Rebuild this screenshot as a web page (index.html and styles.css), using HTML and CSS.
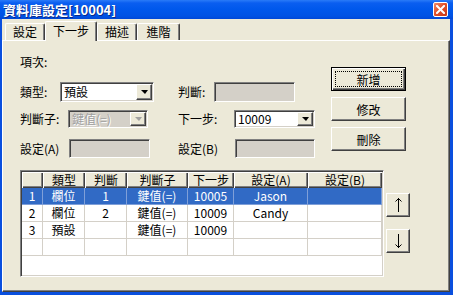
FILE: index.html
```html
<!DOCTYPE html>
<html>
<head>
<meta charset="utf-8">
<link rel="stylesheet" href="styles.css">
</head>
<body>
<div class="window">
  <div class="titlebar">
    <span class="title">資料庫設定[10004]</span>
    <span class="close"><svg width="9" height="9" viewBox="0 0 9 9"><path d="M1 1L8 8M8 1L1 8" stroke="#fff" stroke-width="2" stroke-linecap="square"/></svg></span>
  </div>
  <div class="client">
    <div class="tabs">
      <div class="tab w40">設定</div>
      <div class="tab sel">下一步</div>
      <div class="tab w40">描述</div>
      <div class="tab w43">進階</div>
    </div>
    <div class="panel">
      <div class="top">
        <div class="form">
          <div class="row r0"><span class="lbl">項次:</span></div>
          <div class="row r1">
            <div class="group">
              <span class="lbl l40">類型:</span>
              <div class="combo c94"><span class="val">預設</span><span class="dd"><i></i></span></div>
            </div>
            <div class="group">
              <span class="lbl l36">判斷:</span>
              <div class="field c81 h20"></div>
            </div>
          </div>
          <div class="row r2">
            <div class="group">
              <span class="lbl l48">判斷子:</span>
              <div class="combo c80 off"><span class="val">鍵值(=)</span><span class="dd"><i></i></span></div>
            </div>
            <div class="group">
              <span class="lbl l56">下一步:</span>
              <div class="combo c81"><span class="val">10009</span><span class="dd"><i></i></span></div>
            </div>
          </div>
          <div class="row r3">
            <div class="group">
              <span class="lbl l49">設定(A)</span>
              <div class="field c81"></div>
            </div>
            <div class="group">
              <span class="lbl l57">設定(B)</span>
              <div class="field c80"></div>
            </div>
          </div>
        </div>
        <div class="buttons">
          <div class="btn default"><span class="focus">新增</span></div>
          <div class="btn">修改</div>
          <div class="btn">刪除</div>
        </div>
      </div>
      <div class="bottom">
        <div class="grid">
          <div class="hd"></div><div class="hd">類型</div><div class="hd">判斷</div><div class="hd">判斷子</div><div class="hd">下一步</div><div class="hd">設定(A)</div><div class="hd">設定(B)</div>
          <div class="c s">1</div><div class="c s">欄位</div><div class="c s">1</div><div class="c s">鍵值(=)</div><div class="c s">10005</div><div class="c s">Jason</div><div class="c s"></div>
          <div class="c">2</div><div class="c">欄位</div><div class="c">2</div><div class="c">鍵值(=)</div><div class="c">10009</div><div class="c">Candy</div><div class="c"></div>
          <div class="c">3</div><div class="c">預設</div><div class="c"></div><div class="c">鍵值(=)</div><div class="c">10009</div><div class="c"></div><div class="c"></div>
          <div class="c"></div><div class="c"></div><div class="c"></div><div class="c"></div><div class="c"></div><div class="c"></div><div class="c"></div>
        </div>
        <div class="arrows">
          <div class="btn sq"><svg width="9" height="16" viewBox="0 0 9 16"><path d="M4.5 1V15M1.5 4.5L4.5 1.5L7.5 4.5" stroke="#000" fill="none" stroke-width="1"/></svg></div>
          <div class="btn sq"><svg width="9" height="16" viewBox="0 0 9 16"><path d="M4.5 1V15M1.5 11.5L4.5 14.5L7.5 11.5" stroke="#000" fill="none" stroke-width="1"/></svg></div>
        </div>
      </div>
    </div>
  </div>
</div>
</body>
</html>
```
FILE: styles.css
```css
* { box-sizing: border-box; }
html, body { margin: 0; padding: 0; }
body {
  font-family: "Noto Sans CJK TC", "Liberation Sans", sans-serif;
  font-size: 12px;
  color: #000;
  background: #fff;
}
.window {
  width: 453px;
  height: 295px;
  background: #0A4FDE;
  display: flex;
  flex-direction: column;
}
.titlebar {
  height: 19px;
  flex: none;
  display: flex;
  align-items: center;
  justify-content: space-between;
  padding: 0 5px 0 3px;
  background: linear-gradient(to bottom, #2A7BF8 0px, #0A5EF0 3px, #0058EC 9px, #0052E4 16px, #0048D8 19px);
}
.title {
  color: #fff;
  font-weight: bold;
  font-size: 13px;
  line-height: 16px;
  text-shadow: 1px 1px 0 #0A2A8A;
  letter-spacing: 0;
}
.close {
  width: 15px;
  height: 15px;
  border: 1px solid #fff;
  border-radius: 2px;
  background: linear-gradient(135deg, #F08C6E 0%, #E2512A 45%, #C8381A 100%);
  display: flex;
  align-items: center;
  justify-content: center;
}
.client {
  flex: 1;
  margin: 0 3px 3px 2px;
  background: #ECE9D8;
  display: flex;
  flex-direction: column;
}
.tabs {
  height: 21px;
  flex: none;
  display: flex;
  align-items: flex-end;
  padding-left: 3px;
}
.tab {
  height: 17px;
  line-height: 15px;
  text-align: center;
  border-top: 1px solid #fff;
  border-left: 1px solid #fff;
  border-right: 1px solid #404040;
  box-shadow: inset -1px 0 0 #808080;
  border-radius: 2px 2px 0 0;
  background: #ECE9D8;
}
.w40 { width: 40px; }
.w43 { width: 43px; }
.tab.sel {
  width: 52px;
  height: 20px;
  margin-bottom: -1px;
  position: relative;
  z-index: 1;
  line-height: 17px;
}
.panel {
  flex: 1;
  border-top: 1px solid #fff;
  border-left: 1px solid #fff;
  border-right: 1px solid #404040;
  border-bottom: 1px solid #404040;
  box-shadow: inset -1px -1px 0 #808080;
  display: flex;
  flex-direction: column;
}
.top {
  display: flex;
  padding-left: 17px;
}
.form {
  width: 311px;
  padding-top: 14px;
}
.row {
  display: flex;
  align-items: center;
}
.r0 { height: 14px; }
.r1 { height: 20px; margin-top: 13px; }
.r2 { height: 18px; margin-top: 8px; }
.r3 { height: 19px; margin-top: 11px; }
.group {
  display: flex;
  align-items: center;
  height: 100%;
}
.group:first-child { width: 158px; }
.lbl { line-height: 14px; white-space: nowrap; }
.l36 { width: 36px; }
.l40 { width: 40px; }
.l48 { width: 48px; }
.l49 { width: 49px; }
.l56 { width: 56px; }
.l57 { width: 57px; }
.c80 { width: 80px; }
.c81 { width: 81px; }
.c94 { width: 94px; }
.combo, .field {
  height: 100%;
  border-style: solid;
  border-width: 1px;
  border-color: #808080 #fff #fff #808080;
  box-shadow: inset 1px 1px 0 #404040, inset -1px -1px 0 #D4D0C8;
  background: #fff;
}
.field { background: #D4D0C8; }
.combo {
  display: flex;
  align-items: stretch;
  padding: 1px;
}
.combo .val {
  flex: 1;
  padding-left: 2px;
  line-height: 14px;
  display: flex;
  align-items: center;
}
.dd {
  width: 16px;
  flex: none;
  background: #ECE9D8;
  border-style: solid;
  border-width: 1px;
  border-color: #fff #404040 #404040 #fff;
  box-shadow: inset -1px -1px 0 #808080;
  display: flex;
  align-items: center;
  justify-content: center;
}
.dd i {
  width: 0;
  height: 0;
  border-left: 4px solid transparent;
  border-right: 3px solid transparent;
  border-top: 4px solid #000;
}
.combo.off { background: #D4D0C8; }
.combo.off .val { color: #A0A0A0; text-shadow: 1px 1px 0 #fff; }
.combo.off .dd i { border-top-color: #A0A0A0; }
.buttons {
  margin-top: 26px;
  width: 75px;
  display: flex;
  flex-direction: column;
  gap: 6px;
}
.btn {
  height: 24px;
  background: #ECE9D8;
  border-style: solid;
  border-width: 1px;
  border-color: #fff #404040 #404040 #fff;
  box-shadow: inset -1px -1px 0 #808080;
  display: flex;
  align-items: center;
  justify-content: center;
}
.btn.default {
  border: 1px solid #000;
  box-shadow: inset 1px 1px 0 #fff, inset -1px -1px 0 #404040, inset -2px -2px 0 #808080;
  padding: 3px;
}
.focus {
  flex: 1;
  align-self: stretch;
  border: 1px dotted #000;
  display: flex;
  align-items: center;
  justify-content: center;
}
.bottom {
  display: flex;
  padding-left: 17px;
  margin-top: 12px;
}
.grid {
  width: 364px;
  height: 107px;
  background: #fff;
  border-style: solid;
  border-width: 1px;
  border-color: #808080 #fff #fff #808080;
  box-shadow: inset 1px 1px 0 #404040, inset -1px -1px 0 #D4D0C8;
  padding: 1px;
  display: grid;
  grid-template-columns: 21px 42px 42px 61px 46px 74px 74px;
  grid-template-rows: 16px 17px 17px 17px 17px;
  align-content: start;
}
.hd {
  background: #ECE9D8;
  box-shadow: inset 1px 1px 0 #fff, inset -1px -1px 0 #404040, inset -2px -2px 0 #808080;
  text-align: center;
  line-height: 15px;
  white-space: nowrap;
}
.c {
  border-right: 1px solid #D4D0C8;
  border-bottom: 1px solid #D4D0C8;
  text-align: center;
  line-height: 16px;
  white-space: nowrap;
}
.c.s {
  background: #316AC5;
  color: #fff;
  border-color: #7F9FD8;
}
.arrows {
  margin-left: 2px;
  margin-top: 23px;
  display: flex;
  flex-direction: column;
  gap: 12px;
}
.btn.sq {
  width: 24px;
  height: 24px;
}
```
